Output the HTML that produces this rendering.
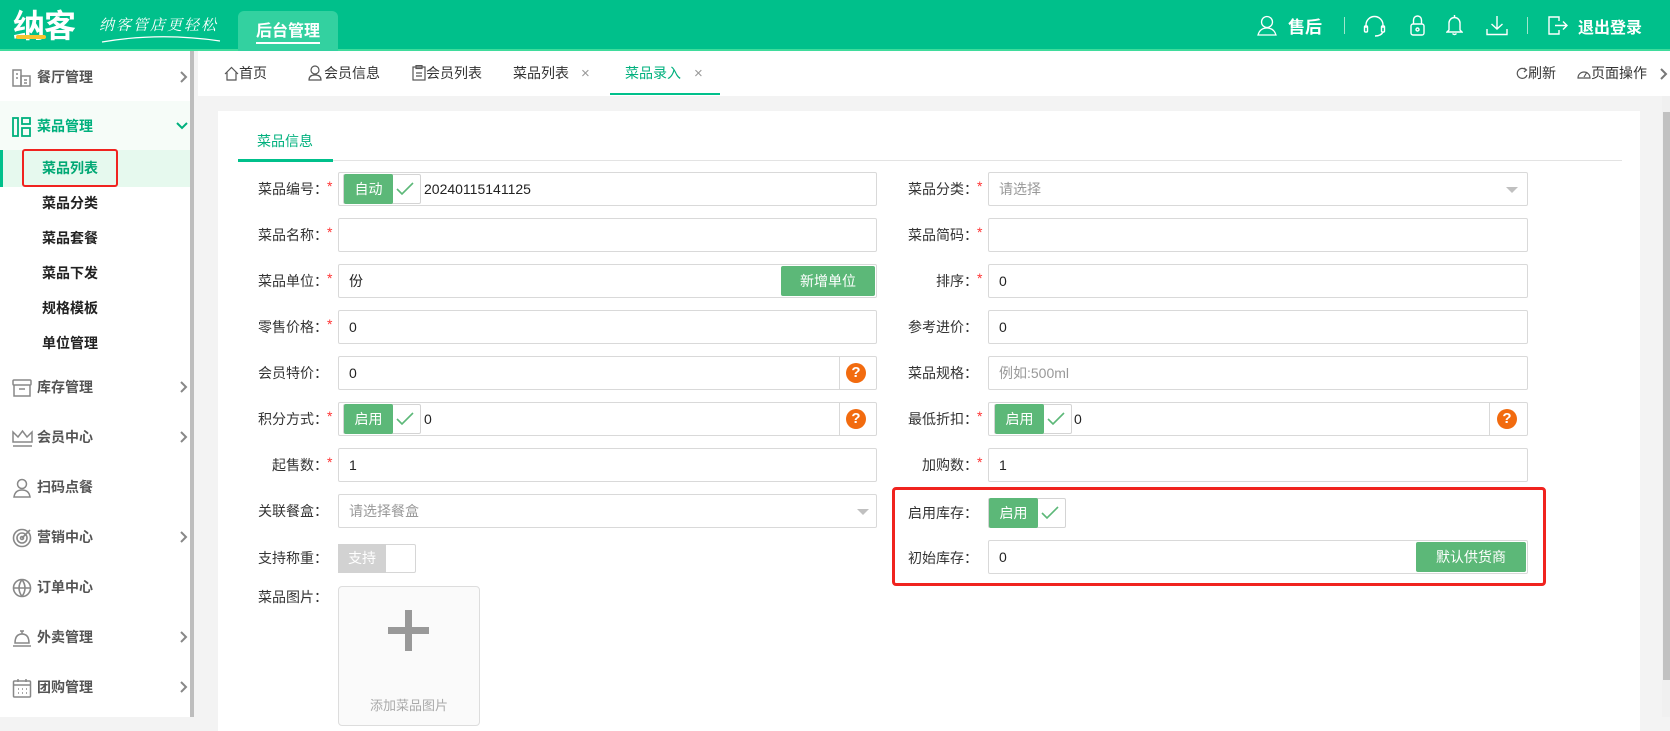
<!DOCTYPE html>
<html><head><meta charset="utf-8"><style>
*{box-sizing:border-box;margin:0;padding:0}
body{width:1670px;height:717px;overflow:hidden;background:#f3f3f3;font-family:"Liberation Sans","Noto Sans CJK SC",sans-serif;font-size:14px;color:#333;position:relative}
.a{position:absolute}
.hdr{left:0;top:0;width:1670px;height:51px;background:#00c08b;border-bottom:2px solid #3fdc9c}
.side{left:0;top:51px;width:194px;height:666px;background:#fff;border-right:4px solid #bdbdbd}
.mi{position:absolute;left:0;width:190px;height:40px;line-height:40px;font-size:14px;font-weight:bold;color:#555}
.mi .t{position:absolute;left:37px}
.mi svg{position:absolute;left:12px;top:11px}
.mi svg.ch{left:180px;top:14px}
.sub{position:absolute;left:42px;font-size:14px;font-weight:bold;color:#222;line-height:20px}
.tabs{left:198px;top:51px;width:1472px;height:45px;background:#fff}
.tab{position:absolute;top:0;line-height:45px;font-size:14px;color:#333}
.card{left:218px;top:111px;width:1422px;height:620px;background:#fff}
.lbl{position:absolute;text-align:right;font-size:14px;color:#333;line-height:34px}
.st{position:absolute;color:#f33;font-size:14px;line-height:28px}
.in{position:absolute;height:34px;border:1px solid #d9d9d9;border-radius:2px;background:#fff;line-height:32px;padding-left:10px;font-size:14px;color:#222}
.ph{color:#999}
.tg{position:absolute;height:30px;border:1px solid #d4d4d4;border-radius:2px;background:#fff}
.tg .g{position:absolute;left:0;top:-1px;height:30px;width:49px;background:#5cb878;color:#fff;text-align:center;line-height:30px;font-size:14px;border-radius:2px}
.tg svg{position:absolute;right:6px;top:7px}
.q{position:absolute;width:20px;height:20px;border-radius:50%;background:#f26b0f;color:#fff;font-weight:bold;text-align:center;line-height:20px;font-size:15px}
.sep{position:absolute;width:1px;background:#d9d9d9}
.btn{position:absolute;background:#5cb878;color:#fff;text-align:center;border-radius:2px;font-size:14px}
.arr{position:absolute;width:0;height:0;border-left:6px solid transparent;border-right:6px solid transparent;border-top:6px solid #c0c0c0}
</style></head><body>
<div class="a hdr">
 <div class="a" style="left:13px;top:4px;font-size:32px;font-weight:bold;color:#fff;letter-spacing:-1px;font-family:'Noto Sans CJK SC',sans-serif;line-height:40px">纳客</div>
 <div class="a" style="left:16px;top:35px;width:30px;height:4px;background:#f6c431;border-radius:2px"></div>
 <div class="a" style="left:99px;top:14px;font-size:15px;color:#fff;font-style:italic;letter-spacing:2px;font-family:'Noto Serif CJK SC',serif">纳客管店更轻松</div>
 <svg class="a" style="left:100px;top:34px" width="122" height="10"><path d="M2 8 Q60 -2 120 7" stroke="#fff" fill="none" stroke-width="1.2"/></svg>
 <div class="a" style="left:238px;top:11px;width:100px;height:40px;background:#33d1a0;border-radius:6px 6px 0 0"></div>
 <div class="a" style="left:238px;top:17px;width:100px;text-align:center;color:#fff;font-size:16px;font-weight:bold">后台管理</div>
 <div class="a" style="left:256px;top:42px;width:64px;height:2px;background:#fff"></div>
 <svg class="a" style="left:1257px;top:15px" width="20" height="21" fill="none" stroke="#fff" stroke-width="1.3"><circle cx="10" cy="7" r="5.5"/><path d="M1 20 Q3 13 10 13 Q17 13 19 20 Z"/></svg>
 <div class="a" style="left:1288px;top:13px;color:#fff;font-size:17px;font-weight:bold">售后</div>
 <div class="a" style="left:1344px;top:17px;width:1px;height:17px;background:#9fe6cc"></div>
 <svg class="a" style="left:1363px;top:15px" width="23" height="22" fill="none" stroke="#fff" stroke-width="1.4"><path d="M3 13 V10 A8.5 8.5 0 0 1 20 10 V13"/><rect x="1.5" y="11" width="3" height="6" rx="1"/><rect x="18.5" y="11" width="3" height="6" rx="1"/><path d="M20 17 Q18 21 12 21"/></svg>
 <svg class="a" style="left:1410px;top:14px" width="15" height="22" fill="none" stroke="#fff" stroke-width="1.4"><path d="M3.5 10 V6 A4 4 0 0 1 11.5 6 V10"/><rect x="1" y="10" width="13" height="11" rx="2"/><circle cx="7.5" cy="15.5" r="1.5"/></svg>
 <svg class="a" style="left:1446px;top:13px" width="17" height="23" fill="none" stroke="#fff" stroke-width="1.4"><path d="M3 17 V10 A5.5 5.5 0 0 1 14 10 V17 L16 19 H1 Z"/><path d="M8.5 2 V4.5"/><path d="M6.5 20.5 Q8.5 22.5 10.5 20.5"/></svg>
 <svg class="a" style="left:1486px;top:15px" width="22" height="21" fill="none" stroke="#fff" stroke-width="1.4"><path d="M11 1 V14 M5.5 9 L11 14 L16.5 9"/><path d="M1 14 V19.5 H21 V14"/></svg>
 <div class="a" style="left:1527px;top:17px;width:1px;height:17px;background:#9fe6cc"></div>
 <svg class="a" style="left:1547px;top:15px" width="22" height="21" fill="none" stroke="#fff" stroke-width="1.4"><path d="M12 6 V2 H2 V19 H12 V15"/><path d="M8 10.5 H20 M16 6.5 L20 10.5 L16 14.5"/></svg>
 <div class="a" style="left:1578px;top:14px;color:#fff;font-size:16px;font-weight:bold">退出登录</div>
</div>

<div class="a side">
 <div class="mi" style="top:6px"><svg width="20" height="20" fill="none" stroke="#888" stroke-width="1.5"><rect x="1" y="2" width="8" height="16"/><rect x="9" y="8" width="9" height="10"/><path d="M4 6h2M4 10h2M12 12h3M12 15h3"/></svg><span class="t">餐厅管理</span><svg class="ch" width="8" height="12" fill="none" stroke="#888" stroke-width="2"><path d="M1 1 L6 6 L1 11"/></svg></div>
 <div class="a" style="left:0;top:50px;width:190px;height:49px;background:#f6fcf8"></div>
 <div class="mi" style="top:55px;color:#00b07d"><svg width="20" height="20" fill="none" stroke="#00b07d" stroke-width="1.8"><rect x="1" y="1" width="5" height="18"/><rect x="10" y="1" width="8" height="6"/><rect x="10" y="11" width="8" height="8"/></svg><span class="t">菜品管理</span><svg class="ch" style="left:176px;top:16px" width="12" height="8" fill="none" stroke="#00b07d" stroke-width="2"><path d="M1 1 L6 6 L11 1"/></svg></div>
 <div class="a" style="left:0;top:99px;width:190px;height:37px;background:#e6f9ee;border-left:3px solid #00c08b"></div>
 <div class="a" style="left:22px;top:98px;width:96px;height:38px;border:2px solid #f0231f;border-radius:3px"></div>
 <div class="sub" style="top:107px;color:#00a874">菜品列表</div>
 <div class="sub" style="top:142px">菜品分类</div>
 <div class="sub" style="top:177px">菜品套餐</div>
 <div class="sub" style="top:212px">菜品下发</div>
 <div class="sub" style="top:247px">规格模板</div>
 <div class="sub" style="top:282px">单位管理</div>
 <div class="mi" style="top:316px"><svg width="20" height="20" fill="none" stroke="#888" stroke-width="1.5"><rect x="1" y="2" width="18" height="5" rx="1"/><path d="M2 7 V18 H18 V7"/><path d="M7 11h6"/></svg><span class="t">库存管理</span><svg class="ch" width="8" height="12" fill="none" stroke="#888" stroke-width="2"><path d="M1 1 L6 6 L1 11"/></svg></div>
 <div class="mi" style="top:366px"><svg width="21" height="20" fill="none" stroke="#888" stroke-width="1.5"><path d="M1 14 V4 L6 9 L10.5 3 L15 9 L20 4 V14 Z"/><path d="M1 18 H20"/></svg><span class="t">会员中心</span><svg class="ch" width="8" height="12" fill="none" stroke="#888" stroke-width="2"><path d="M1 1 L6 6 L1 11"/></svg></div>
 <div class="mi" style="top:416px"><svg width="20" height="20" fill="none" stroke="#888" stroke-width="1.5"><circle cx="10" cy="6" r="4.5"/><path d="M2 19 Q3 12 10 12 Q17 12 18 19 Z"/></svg><span class="t">扫码点餐</span></div>
 <div class="mi" style="top:466px"><svg width="20" height="20" fill="none" stroke="#888" stroke-width="1.6"><circle cx="10" cy="10" r="8.5"/><circle cx="10" cy="10" r="5"/><circle cx="10" cy="10" r="1.5"/><path d="M10 10 L18 2"/></svg><span class="t">营销中心</span><svg class="ch" width="8" height="12" fill="none" stroke="#888" stroke-width="2"><path d="M1 1 L6 6 L1 11"/></svg></div>
 <div class="mi" style="top:516px"><svg width="20" height="20" fill="none" stroke="#888" stroke-width="1.6"><circle cx="10" cy="10" r="8.5"/><path d="M1.5 10 H18.5 M10 1.5 Q4 10 10 18.5 M10 1.5 Q16 10 10 18.5"/></svg><span class="t">订单中心</span></div>
 <div class="mi" style="top:566px"><svg width="20" height="20" fill="none" stroke="#888" stroke-width="1.5"><path d="M3 15 Q3 6 10 6 Q17 6 17 15 Z"/><path d="M1 18 H19 M10 3 V6 M8 3 H12"/></svg><span class="t">外卖管理</span><svg class="ch" width="8" height="12" fill="none" stroke="#888" stroke-width="2"><path d="M1 1 L6 6 L1 11"/></svg></div>
 <div class="mi" style="top:616px"><svg width="20" height="20" fill="none" stroke="#888" stroke-width="1.5"><rect x="1.5" y="3" width="17" height="16" rx="1"/><path d="M1.5 7 H18.5 M6 1 V4 M14 1 V4"/><path d="M6 11h1M10 11h1M14 11h1M6 15h1M10 15h1M14 15h1"/></svg><span class="t">团购管理</span><svg class="ch" width="8" height="12" fill="none" stroke="#888" stroke-width="2"><path d="M1 1 L6 6 L1 11"/></svg></div>
</div>

<div class="a tabs">
 <svg class="a" style="left:26px;top:15px" width="15" height="15" fill="none" stroke="#555" stroke-width="1.2"><path d="M1 8 L7.5 1.5 L14 8 M3 6.5 V14 H12 V6.5"/></svg>
 <div class="tab" style="left:41px">首页</div>
 <svg class="a" style="left:110px;top:14px" width="16" height="16" fill="none" stroke="#555" stroke-width="1.2"><circle cx="7" cy="5" r="4"/><path d="M1 15 Q1 10 7 10 Q13 10 13 15 Z"/></svg>
 <div class="tab" style="left:126px">会员信息</div>
 <svg class="a" style="left:214px;top:14px" width="14" height="16" fill="none" stroke="#555" stroke-width="1.2"><rect x="1" y="2" width="12" height="13"/><rect x="4" y="0.5" width="6" height="3"/><path d="M4 8h6M4 11h6"/></svg>
 <div class="tab" style="left:228px">会员列表</div>
 <div class="tab" style="left:315px">菜品列表</div>
 <div class="tab" style="color:#999;font-size:15px;left:383px">×</div>
 <div class="tab" style="left:427px;color:#00b07d">菜品录入</div>
 <div class="tab" style="left:496px;color:#999;font-size:15px">×</div>
 <div class="a" style="left:412px;top:42px;width:110px;height:2px;background:#00c08b"></div>
 <svg class="a" style="left:1318px;top:16px" width="12" height="13" fill="none" stroke="#555" stroke-width="1.2"><path d="M10 3 A5 5 0 1 0 11 8"/><path d="M8 1 L10.5 3 L8 5"/></svg>
 <div class="tab" style="left:1330px">刷新</div>
 <svg class="a" style="left:1379px;top:16px" width="14" height="13" fill="none" stroke="#555" stroke-width="1.2"><path d="M1 11 A6 6 0 1 1 13 11 Z"/><path d="M7 10 L10 5"/></svg>
 <div class="tab" style="left:1393px">页面操作</div>
 <svg class="a" style="left:1462px;top:17px" width="8" height="12" fill="none" stroke="#777" stroke-width="2"><path d="M1 1 L6 6 L1 11"/></svg>
</div>
<div class="a" style="left:1662px;top:96px;width:8px;height:621px;background:#f0f0f0"></div>
<div class="a" style="left:1663px;top:112px;width:7px;height:568px;background:#c1c1c1"></div>

<div class="a card"></div>
<div class="a" style="left:257px;top:131px;color:#00b07d;font-size:14px">菜品信息</div>
<div class="a" style="left:238px;top:160px;width:1384px;height:1px;background:#e3e3e3"></div>
<div class="a" style="left:238px;top:159px;width:95px;height:3px;background:#00c08b"></div>

<!-- left column -->
<div class="lbl" style="left:208px;width:120px;top:172px">菜品编号：</div><div class="st" style="left:327px;top:172px">*</div>
<div class="in" style="left:338px;top:172px;width:539px;padding-left:85px">20240115141125</div>
<div class="tg" style="left:343px;top:174px;width:78px"><div class="g">自动</div><svg width="18" height="14" fill="none" stroke="#5cb878" stroke-width="1.6"><path d="M1 7 L6 12 L17 1"/></svg></div>

<div class="lbl" style="left:208px;width:120px;top:218px">菜品名称：</div><div class="st" style="left:327px;top:218px">*</div>
<div class="in" style="left:338px;top:218px;width:539px"></div>

<div class="lbl" style="left:208px;width:120px;top:264px">菜品单位：</div><div class="st" style="left:327px;top:264px">*</div>
<div class="in" style="left:338px;top:264px;width:539px">份</div>
<div class="btn" style="left:781px;top:266px;width:94px;height:30px;line-height:30px">新增单位</div>

<div class="lbl" style="left:208px;width:120px;top:310px">零售价格：</div><div class="st" style="left:327px;top:310px">*</div>
<div class="in" style="left:338px;top:310px;width:539px">0</div>

<div class="lbl" style="left:208px;width:120px;top:356px">会员特价：</div>
<div class="in" style="left:338px;top:356px;width:539px">0</div>
<div class="sep" style="left:839px;top:357px;height:32px"></div>
<div class="q" style="left:846px;top:363px">?</div>

<div class="lbl" style="left:208px;width:120px;top:402px">积分方式：</div><div class="st" style="left:327px;top:402px">*</div>
<div class="in" style="left:338px;top:402px;width:539px;padding-left:85px">0</div>
<div class="tg" style="left:343px;top:404px;width:78px"><div class="g">启用</div><svg width="18" height="14" fill="none" stroke="#5cb878" stroke-width="1.6"><path d="M1 7 L6 12 L17 1"/></svg></div>
<div class="sep" style="left:839px;top:403px;height:32px"></div>
<div class="q" style="left:846px;top:409px">?</div>

<div class="lbl" style="left:208px;width:120px;top:448px">起售数：</div><div class="st" style="left:327px;top:448px">*</div>
<div class="in" style="left:338px;top:448px;width:539px">1</div>

<div class="lbl" style="left:208px;width:120px;top:494px">关联餐盒：</div>
<div class="in ph" style="left:338px;top:494px;width:539px">请选择餐盒</div>
<div class="arr" style="left:857px;top:509px"></div>

<div class="lbl" style="left:208px;width:120px;top:541px">支持称重：</div>
<div class="a" style="left:338px;top:544px;width:78px;height:29px;border:1px solid #d6d6d6;border-radius:2px;background:#fff"></div>
<div class="a" style="left:338px;top:544px;width:48px;height:29px;background:#d2d2d2;color:#fff;text-align:center;line-height:29px">支持</div>

<div class="lbl" style="left:208px;width:120px;top:587px;line-height:20px">菜品图片：</div>
<div class="a" style="left:338px;top:586px;width:142px;height:140px;border:1px solid #ddd;border-radius:4px;background:#fafafa"></div>
<div class="a" style="left:388px;top:627px;width:41px;height:7px;background:#999"></div>
<div class="a" style="left:405px;top:610px;width:7px;height:41px;background:#999"></div>
<div class="a" style="left:338px;top:695px;width:142px;text-align:center;color:#aaa;font-size:13px">添加菜品图片</div>

<!-- right column -->
<div class="lbl" style="left:858px;width:120px;top:172px">菜品分类：</div><div class="st" style="left:977px;top:172px">*</div>
<div class="in ph" style="left:988px;top:172px;width:540px">请选择</div>
<div class="arr" style="left:1506px;top:187px"></div>

<div class="lbl" style="left:858px;width:120px;top:218px">菜品简码：</div><div class="st" style="left:977px;top:218px">*</div>
<div class="in" style="left:988px;top:218px;width:540px"></div>

<div class="lbl" style="left:858px;width:120px;top:264px">排序：</div><div class="st" style="left:977px;top:264px">*</div>
<div class="in" style="left:988px;top:264px;width:540px">0</div>

<div class="lbl" style="left:858px;width:120px;top:310px">参考进价：</div>
<div class="in" style="left:988px;top:310px;width:540px">0</div>

<div class="lbl" style="left:858px;width:120px;top:356px">菜品规格：</div>
<div class="in ph" style="left:988px;top:356px;width:540px">例如:500ml</div>

<div class="lbl" style="left:858px;width:120px;top:402px">最低折扣：</div><div class="st" style="left:977px;top:402px">*</div>
<div class="in" style="left:988px;top:402px;width:540px;padding-left:85px">0</div>
<div class="tg" style="left:994px;top:404px;width:78px"><div class="g">启用</div><svg width="18" height="14" fill="none" stroke="#5cb878" stroke-width="1.6"><path d="M1 7 L6 12 L17 1"/></svg></div>
<div class="sep" style="left:1489px;top:403px;height:32px"></div>
<div class="q" style="left:1497px;top:409px">?</div>

<div class="lbl" style="left:858px;width:120px;top:448px">加购数：</div><div class="st" style="left:977px;top:448px">*</div>
<div class="in" style="left:988px;top:448px;width:540px">1</div>

<div class="a" style="left:892px;top:487px;width:654px;height:99px;border:3px solid #f0231f;border-radius:4px"></div>
<div class="lbl" style="left:858px;width:120px;top:496px">启用库存：</div>
<div class="tg" style="left:988px;top:498px;width:78px"><div class="g">启用</div><svg width="18" height="14" fill="none" stroke="#5cb878" stroke-width="1.6"><path d="M1 7 L6 12 L17 1"/></svg></div>
<div class="lbl" style="left:858px;width:120px;top:541px">初始库存：</div>
<div class="in" style="left:988px;top:540px;width:540px">0</div>
<div class="btn" style="left:1416px;top:542px;width:110px;height:30px;line-height:30px">默认供货商</div>
</body></html>
